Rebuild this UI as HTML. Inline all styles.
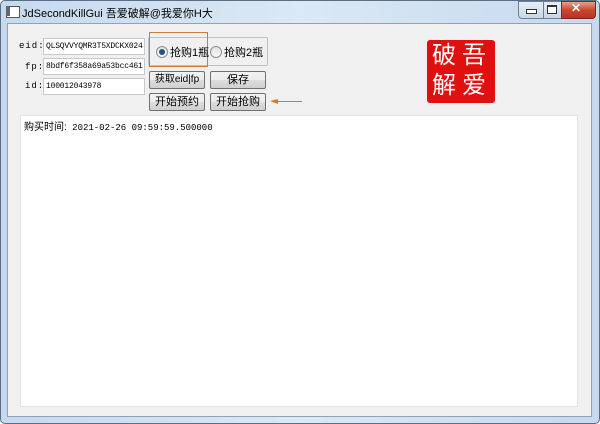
<!DOCTYPE html><html><head><style>
body{margin:0;width:600px;height:424px;overflow:hidden;background:#fff;font-family:"Liberation Sans","Noto Sans CJK SC",sans-serif;}
.win{position:absolute;left:0;top:0;width:598px;height:422px;border:1px solid #5a6f86;border-radius:5px;background:linear-gradient(90deg,#c6d9ee,#dbe8f5 50%,#c6d9ee);}
.client{position:absolute;left:7px;top:23px;width:583px;height:392px;background:#f0f0f0;border:1px solid #8ea3b8;}
.t{position:absolute;font-size:11px;color:#000;}
.mono{font-family:"Liberation Mono","Noto Sans CJK SC",monospace;font-size:9px;}
.inp{position:absolute;background:#fff;border:1px solid #c8c8c8;height:15px;font-family:"Liberation Mono",monospace;font-size:8px;line-height:15px;padding-left:2px;overflow:hidden;white-space:nowrap;letter-spacing:-0.2px}
.btn{position:absolute;height:16px;border:1px solid #707070;border-radius:2px;background:linear-gradient(#f2f2f2,#ebebeb 50%,#dddddd 51%,#cfcfcf);font-size:11px;text-align:center;line-height:16px;}
.rad{position:absolute;width:10px;height:10px;border:1px solid #8e8f8f;border-radius:50%;background:linear-gradient(#e0e0e0,#fafafa);}
</style></head><body>
<div class="win"></div>
<div style="position:absolute;left:6px;top:6px;width:12px;height:10px;border:1px solid #555;background:#fff"></div>
<div style="position:absolute;left:6px;top:6px;width:4px;height:10px;background:#666"></div>
<div class="t" style="left:22px;top:5px;font-size:11px">JdSecondKillGui 吾爱破解@我爱你H大</div>
<div style="position:absolute;left:518px;top:1px;width:25px;height:16px;border:1px solid #6d7f95;border-radius:0 0 0 4px;background:linear-gradient(#e8eff7,#c8d6e6)"></div>
<div style="position:absolute;left:526px;top:9px;width:9px;height:3px;border:1px solid #333;background:#fff"></div>
<div style="position:absolute;left:543px;top:1px;width:17px;height:16px;border:1px solid #6d7f95;background:linear-gradient(#e8eff7,#c8d6e6)"></div>
<div style="position:absolute;left:547px;top:5px;width:8px;height:6px;border:1px solid #333;border-top-width:2px;background:#fff"></div>
<div style="position:absolute;left:561px;top:1px;width:33px;height:16px;border:1px solid #7a2a20;border-radius:0 0 4px 0;background:linear-gradient(#e8a190,#c8472f 50%,#b9321e)"></div>
<div class="t" style="left:571px;top:1px;color:#fff;font-weight:bold;font-size:12px">✕</div>
<div class="client"></div>
<div class="t mono" style="left:19px;top:41px;letter-spacing:1px">eid:</div>
<div class="t mono" style="left:25px;top:62px;letter-spacing:1px">fp:</div>
<div class="t mono" style="left:25px;top:81px;letter-spacing:1px">id:</div>
<div class="inp" style="left:43px;top:38px;width:98px">QLSQVVYQMR3T5XDCKX024</div>
<div class="inp" style="left:43px;top:58px;width:98px">8bdf6f358a69a53bcc461</div>
<div class="inp" style="left:43px;top:78px;width:98px">100012043978</div>
<div style="position:absolute;left:148px;top:37px;width:118px;height:27px;border:1px solid #c0c0c0;border-radius:2px"></div>
<div style="position:absolute;left:149px;top:32px;width:57px;height:33px;border:1px solid #d07a3a"></div>
<div class="rad" style="left:156px;top:46px"></div><div style="position:absolute;left:159px;top:49px;width:6px;height:6px;border-radius:50%;background:#2b4f87"></div>
<div class="t" style="left:170px;top:44px">抢购1瓶</div>
<div class="rad" style="left:210px;top:46px"></div>
<div class="t" style="left:224px;top:44px">抢购2瓶</div>
<div class="btn" style="left:149px;top:71px;width:54px;font-size:10px">获取eid|fp</div>
<div class="btn" style="left:210px;top:71px;width:54px">保存</div>
<div class="btn" style="left:149px;top:93px;width:54px">开始预约</div>
<div class="btn" style="left:210px;top:93px;width:54px">开始抢购</div>
<div style="position:absolute;left:272px;top:101px;width:30px;height:1px;background:#d07a3a"></div>
<div style="position:absolute;left:270px;top:99px;width:0;height:0;border-top:2px solid transparent;border-bottom:3px solid transparent;border-right:8px solid #d07a3a"></div>
<div style="position:absolute;left:427px;top:40px;width:68px;height:63px;background:#e01010;border-radius:3px"></div>
<div class="t" style="left:432px;top:41px;color:#fff;font-size:24px;line-height:30px;width:68px;letter-spacing:6px">破吾<br>解爱</div>
<div style="position:absolute;left:20px;top:115px;width:556px;height:290px;background:#fff;border:1px solid #e3e3e3"></div>
<div class="t" style="left:24px;top:118px;font-size:10px">购买时间:<span class="mono"> 2021-02-26 09:59:59.500000</span></div>
</body></html>
